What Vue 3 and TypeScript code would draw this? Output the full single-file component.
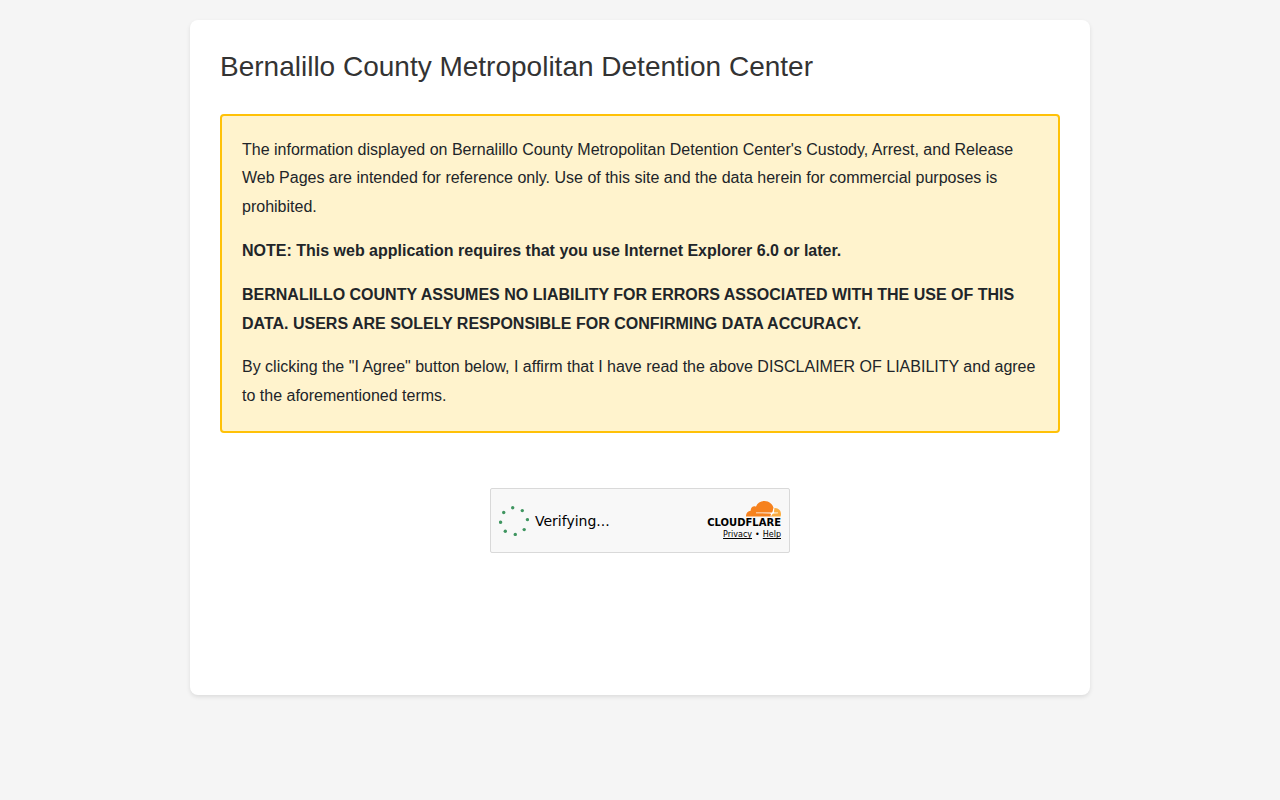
<script setup lang="ts">
const facilityName = 'Bernalillo County Metropolitan Detention Center'

const spinnerDots: { x: number; y: number }[] = [
  { x: 13.7, y: 1.7 },
  { x: 23.3, y: 4.6 },
  { x: 28.4, y: 13.6 },
  { x: 25.2, y: 23.6 },
  { x: 16.3, y: 28.4 },
  { x: 6.3, y: 25.3 },
  { x: 1.6, y: 16.2 },
  { x: 4.7, y: 6.5 },
]
</script>

<template>
  <main class="card">
    <h1>{{ facilityName }}</h1>

    <section class="disclaimer">
      <p>
        The information displayed on {{ facilityName }}'s Custody, Arrest, and Release Web Pages are
        intended for reference only. Use of this site and the data herein for commercial purposes is
        prohibited.
      </p>
      <p><strong>NOTE: This web application requires that you use Internet Explorer 6.0 or later.</strong></p>
      <p>
        <strong>BERNALILLO COUNTY ASSUMES NO LIABILITY FOR ERRORS ASSOCIATED WITH THE USE OF THIS DATA.
          USERS ARE SOLELY RESPONSIBLE FOR CONFIRMING DATA ACCURACY.</strong>
      </p>
      <p>
        By clicking the "I Agree" button below, I affirm that I have read the above DISCLAIMER OF
        LIABILITY and agree to the aforementioned terms.
      </p>
    </section>

    <div class="challenge">
      <div class="status" role="status">
        <svg class="spinner" viewBox="0 0 30 30" aria-hidden="true">
          <circle v-for="(dot, i) in spinnerDots" :key="i" :cx="dot.x" :cy="dot.y" r="1.7" />
        </svg>
        <span>Verifying...</span>
      </div>
      <div class="brand">
        <svg class="cloud" viewBox="0 0 35 16" aria-hidden="true">
          <path fill="#fbad41" d="M28.2 7.1C31.9 6.7 35 9.4 35 13c0 .9-.1 1.8-.4 2.6H23.8l1.4-3.1 2.8-.4z" />
          <path fill="#f6821f" d="M0 15.6c-.2-3.1 1.8-5.5 4.7-5.8C4.5 6.700 7.100 4.500 9.900 5.700 11.300 2 14.700 0 18.400 0c4.700 0 8.500 3.200 9.300 7.500l-.9 3.600-1.500 4.500z" />
          <path fill="#fff" d="M10 11.500l15.600.1c.5-.1.8-.4 1-1l.8-3.300h1l-.6 3c-.1.700.2 1.100.9 1.100l3.300.2v.7l-4.300.2c-1.300.2-1.900 1.200-2.400 3.100h-1l.6-2c.2-.8-.2-1.100-1-1.200l-13.900-.2z" />
        </svg>
        <span class="wordmark">CLOUDFLARE</span>
        <div class="links">
          <a href="#privacy">Privacy</a>
          <span>•</span>
          <a href="#help">Help</a>
        </div>
      </div>
    </div>
  </main>
</template>

<style>
body {
  background: #f5f5f5;
}
</style>

<style scoped>
.card {
  box-sizing: border-box;
  max-width: 900px;
  margin: 20px auto;
  padding: 30px 30px 142px;
  background: #fff;
  border-radius: 8px;
  box-shadow: 0 2px 4px rgba(0, 0, 0, 0.1);
  color: #212529;
  font: 16px "Liberation Sans", Arial, sans-serif;
}

h1 {
  margin: 0 0 30px;
  color: #333;
  font-size: 28px;
  font-weight: 400;
  line-height: 1.2;
}

.disclaimer {
  padding: 20px;
  background: #fff3cd;
  border: 2px solid #ffc107;
  border-radius: 4px;
  line-height: 1.8;
}

.disclaimer p {
  margin: 0 0 15px;
}

.disclaimer p:last-child {
  margin-bottom: 0;
}

.challenge {
  box-sizing: border-box;
  display: flex;
  align-items: center;
  justify-content: space-between;
  max-width: 300px;
  min-height: 65px;
  margin: 55px auto 0;
  padding: 2px 8px 0;
  background: #f8f8f8;
  border: 1px solid #d9d9d9;
  border-radius: 2px;
  color: #000;
  font: 14px "DejaVu Sans", sans-serif;
}

.status {
  display: flex;
  align-items: center;
  gap: 6px;
}

.spinner {
  width: 30px;
  height: 30px;
  fill: #3f9560;
}

.brand {
  display: flex;
  flex-direction: column;
  align-items: flex-end;
}

.cloud {
  width: 35px;
  height: 16px;
}

.wordmark {
  font: 700 10px/12px "DejaVu Sans", sans-serif;
}

.links {
  display: flex;
  gap: 3px;
  font-size: 8px;
  line-height: 12px;
}

.links a {
  color: #000;
  text-decoration: underline;
}
</style>
